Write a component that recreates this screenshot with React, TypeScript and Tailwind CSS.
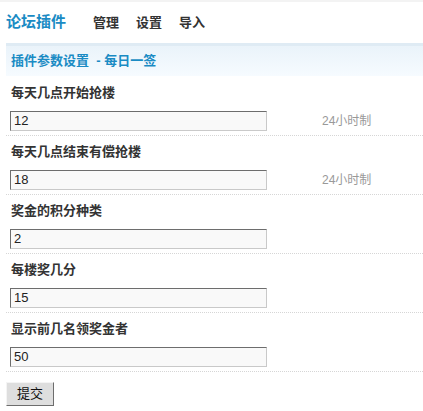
const fields = [
  { label: "每天几点开始抢楼", value: "12", hint: "24小时制" },
  { label: "每天几点结束有偿抢楼", value: "18", hint: "24小时制" },
  { label: "奖金的积分种类", value: "2", hint: "" },
  { label: "每楼奖几分", value: "15", hint: "" },
  { label: "显示前几名领奖金者", value: "50", hint: "" },
];

const font = { fontFamily: '"Liberation Sans", "Noto Sans CJK SC", sans-serif' };

export default function App() {
  return (
    <div className="w-[423px] h-[411px] bg-white overflow-hidden text-[#333]" style={font}>
      {/* Header */}
      <div className="h-[43px] flex items-center pl-[6px] border-t-2 border-[#f3f3f3]">
        <span className="text-[15px] font-bold text-[#1a8bc4] mr-[27px]">论坛插件</span>
        <nav className="flex gap-[17px] text-[13px] font-bold text-[#333]">
          <span>管理</span>
          <span>设置</span>
          <span>导入</span>
        </nav>
      </div>

      {/* Panel title */}
      <div className="ml-[6px] h-[33px] border-t-[3px] border-[#dfebf4] bg-gradient-to-b from-[#eaf3fa] to-[#f6fbff] flex items-center pl-[5px]">
        <span className="text-[13px] font-bold text-[#1a8bc4]">插件参数设置 &nbsp;- 每日一签</span>
      </div>

      {/* Fields */}
      <div className="ml-[6px] mt-[1px]">
        {fields.map((f) => (
          <div key={f.label} className="border-b border-dotted border-[#d6d6d6] pt-[7px] pb-[4px]">
            <div className="text-[13px] font-bold pl-[5px] h-[18px] leading-[18px]">{f.label}</div>
            <div className="flex items-center mt-[9px]">
              <div className="ml-[4px] w-[257px] h-[20px] bg-[#f9f9f9] border border-t-[#6d6d6d] border-l-[#6d6d6d] border-r-[#c9c9c9] border-b-[#c9c9c9] flex items-center pl-[3px] text-[13px] text-[#222]">
                {f.value}
              </div>
              {f.hint && <span className="ml-[55px] text-[12px] text-[#999]">{f.hint}</span>}
            </div>
          </div>
        ))}
      </div>

      {/* Submit */}
      <div className="ml-[6px] mt-[9px]">
        <button className="w-[48px] h-[24px] bg-[#dedede] border border-t-[#f4f4f4] border-l-[#f4f4f4] border-r-[#6d6d6d] border-b-[#6d6d6d] text-[13px] text-[#111] leading-none">
          提交
        </button>
      </div>
    </div>
  );
}
